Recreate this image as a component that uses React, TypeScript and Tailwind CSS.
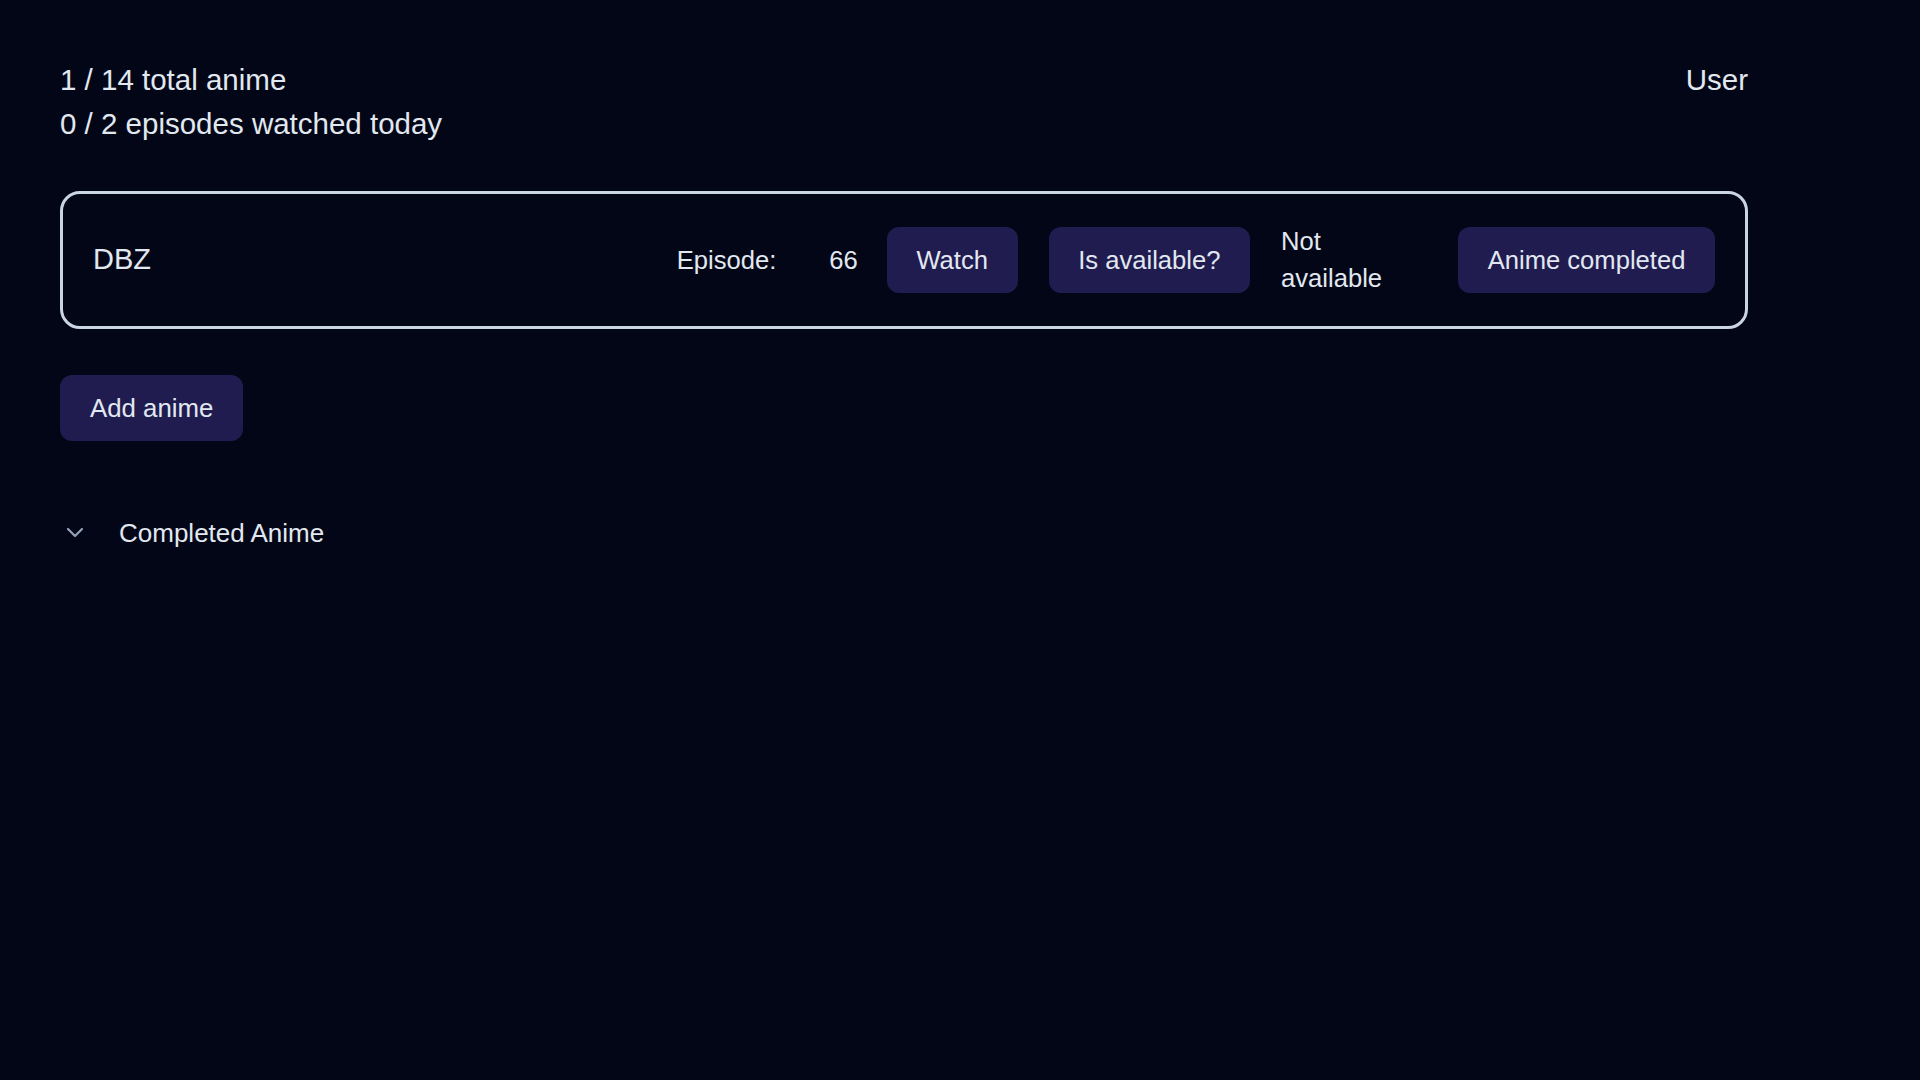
import React from 'react';

const btn =
  'h-[66px] px-[29.6px] rounded-[12px] bg-[#201c50] text-[25.6px] text-[#e2e8f0] whitespace-nowrap';

function AnimeCard() {
  return (
    <div className="flex items-center h-[138px] px-[30px] border-[3px] border-[#cbd5e1] rounded-[20px]">
      <div className="flex-1 text-[29px]">DBZ</div>
      <span className="text-[25.6px] mr-[53px]">Episode:</span>
      <span className="text-[25.6px] mr-[29px]">66</span>
      <button className={btn}>Watch</button>
      <button className={btn + ' ml-[31px]'}>Is available?</button>
      <div className="w-[146px] ml-[31px] text-[25.6px] leading-[37px]">Not available</div>
      <button className={btn + ' ml-[31px]'}>Anime completed</button>
    </div>
  );
}

export default function App() {
  return (
    <div
      className="min-h-screen w-full bg-[#020617] text-[#e2e8f0]"
      style={{ fontFamily: '"Liberation Sans", Arial, sans-serif' }}
    >
      <div className="w-[1688px] ml-[60px] pt-[58px]">
        {/* header stats */}
        <div className="flex justify-between text-[29.5px] leading-[44px]">
          <div>
            <div>1 / 14 total anime</div>
            <div>0 / 2 episodes watched today</div>
          </div>
          <div>User</div>
        </div>

        <div className="mt-[45px]">
          <AnimeCard />
        </div>

        <button className="mt-[46px] h-[66px] px-[30px] rounded-[12px] bg-[#201c50] text-[25.8px] text-[#e2e8f0]">
          Add anime
        </button>

        {/* completed list toggle */}
        <div className="flex items-center mt-[72px] h-[40px]">
          <svg
            width="18"
            height="12"
            viewBox="0 0 18 12"
            className="ml-[6px]"
            fill="none"
            stroke="#94a3b8"
            strokeWidth="2.2"
            strokeLinecap="round"
            strokeLinejoin="round"
          >
            <path d="M2 2l7 7 7-7" />
          </svg>
          <span className="ml-[35px] text-[26px]">Completed Anime</span>
        </div>
      </div>
    </div>
  );
}
